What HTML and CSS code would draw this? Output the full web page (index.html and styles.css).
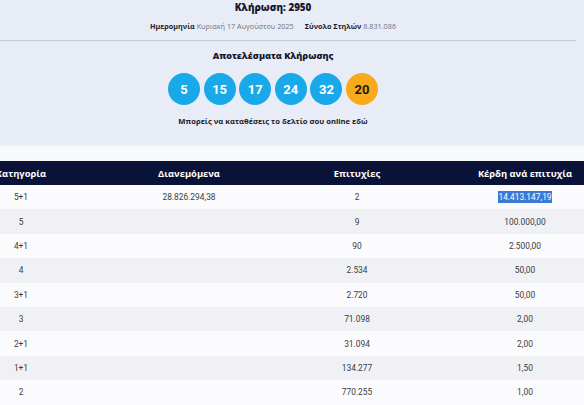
FILE: index.html
```html
<!DOCTYPE html>
<html lang="el">
<head>
<meta charset="utf-8">
<title>Κλήρωση 2950</title>
<link rel="stylesheet" href="styles.css">
</head>
<body>
<div class="page">
  <section class="draw">
    <h1 class="draw-title">Κλήρωση: 2950</h1>
    <p class="draw-meta"><b>Ημερομηνία</b> Κυριακή 17 Αυγούστου 2025<span class="meta-gap"></span><b>Σύνολο Στηλών</b> 8.831.086</p>
    <div class="divider"></div>
    <h2 class="results-title">Αποτελέσματα Κλήρωσης</h2>
    <div class="balls">
      <span class="ball">5</span>
      <span class="ball">15</span>
      <span class="ball">17</span>
      <span class="ball">24</span>
      <span class="ball">32</span>
      <span class="ball ball-bonus">20</span>
    </div>
    <p class="draw-link">Μπορείς να καταθέσεις το δελτίο σου online εδώ</p>
  </section>
  <div class="gap"></div>
  <table class="prizes">
    <thead>
      <tr><th>Κατηγορία</th><th>Διανεμόμενα</th><th>Επιτυχίες</th><th>Κέρδη ανά επιτυχία</th></tr>
    </thead>
    <tbody>
      <tr><td>5+1</td><td>28.826.294,38</td><td>2</td><td><span class="selected">14.413.147,19</span></td></tr>
      <tr><td>5</td><td></td><td>9</td><td>100.000,00</td></tr>
      <tr><td>4+1</td><td></td><td>90</td><td>2.500,00</td></tr>
      <tr><td>4</td><td></td><td>2.534</td><td>50,00</td></tr>
      <tr><td>3+1</td><td></td><td>2.720</td><td>50,00</td></tr>
      <tr><td>3</td><td></td><td>71.098</td><td>2,00</td></tr>
      <tr><td>2+1</td><td></td><td>31.094</td><td>2,00</td></tr>
      <tr><td>1+1</td><td></td><td>134.277</td><td>1,50</td></tr>
      <tr><td>2</td><td></td><td>770.255</td><td>1,00</td></tr>
    </tbody>
  </table>
</div>
</body>
</html>
```
FILE: styles.css
```css
html, body {
  margin: 0;
  padding: 0;
}
body {
  background: #f8f9fb;
  overflow: hidden;
  font-family: "Open Sans", "Noto Sans", sans-serif;
  color: #1c1d2b;
}
.page {
  width: 672px;
  margin-left: -63px;
}
.draw {
  background: #e8ecf6;
  height: 143px;
  box-sizing: border-box;
  text-align: center;
  box-shadow: 0 2px 3px rgba(30, 40, 80, 0.08);
}
.draw-title {
  margin: 0;
  font-size: 9.8px;
  line-height: 15px;
  font-weight: 800;
  color: #16172a;
}
.draw-meta {
  margin: 5px 0 0;
  font-size: 7.25px;
  line-height: 12px;
  color: #6f7280;
}
.draw-meta b {
  color: #1c1d2b;
  font-weight: 700;
}
.meta-gap {
  display: inline-block;
  width: 11px;
}
.divider {
  margin: 8px 33px 0;
  height: 1px;
  background: #c7cad3;
}
.results-title {
  margin: 8px 0 0;
  font-size: 9px;
  line-height: 14px;
  font-weight: 800;
  color: #16172a;
}
.balls {
  margin-top: 10px;
  display: flex;
  justify-content: center;
  gap: 3.6px;
}
.ball {
  width: 32px;
  height: 32px;
  border-radius: 50%;
  background: #1aa9e8;
  color: #fff;
  font-family: Roboto, "Liberation Sans", sans-serif;
  font-weight: 700;
  font-size: 13px;
  display: flex;
  align-items: center;
  justify-content: center;
}
.ball-bonus {
  background: #f8a91c;
  color: #1d1a16;
}
.draw-link {
  margin: 11px 0 0;
  font-size: 7.65px;
  line-height: 10px;
  font-weight: 700;
  color: #1c1d2b;
}
.gap {
  height: 18px;
}
.prizes {
  width: 672px;
  border-collapse: collapse;
  table-layout: fixed;
}
.prizes th {
  background: #0b1238;
  color: #fff;
  height: 24px;
  padding: 0;
  font-size: 9.4px;
  font-weight: 700;
  text-align: center;
}
.prizes td {
  height: 24.4px;
  padding: 0;
  text-align: center;
  font-family: Roboto, "Liberation Sans", sans-serif;
  font-size: 8.4px;
  color: #3a3b44;
}
.prizes tbody tr:nth-child(odd) td {
  background: #fbfbfd;
}
.prizes tbody tr:nth-child(even) td {
  background: #f0f1f5;
}
.selected {
  background: #3a7ad6;
  color: #fff;
  padding: 1px 0;
}
```
